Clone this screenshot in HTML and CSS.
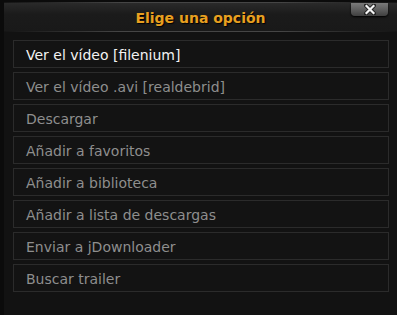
FILE: index.html
```html
<!DOCTYPE html>
<html>
<head>
<meta charset="utf-8">
<link rel="stylesheet" href="styles.css">
</head>
<body>
<div class="dialog">
  <div class="titlebar">
    <span class="title">Elige una opción</span>
    <div class="close">
      <svg class="x" width="12" height="11" viewBox="0 0 12 11">
        <path d="M2 1.5 L10 9.5 M10 1.5 L2 9.5" stroke="#222" stroke-width="4" stroke-linecap="round"/>
        <path d="M2.5 2 L9.5 9 M9.5 2 L2.5 9" stroke="#f4f4f4" stroke-width="2.2" stroke-linecap="square"/>
      </svg>
    </div>
  </div>
  <ul class="menu">
    <li class="item active">Ver el vídeo [filenium]</li>
    <li class="item">Ver el vídeo .avi [realdebrid]</li>
    <li class="item">Descargar</li>
    <li class="item">Añadir a favoritos</li>
    <li class="item">Añadir a biblioteca</li>
    <li class="item">Añadir a lista de descargas</li>
    <li class="item">Enviar a jDownloader</li>
    <li class="item">Buscar trailer</li>
  </ul>
</div>
</body>
</html>
```
FILE: styles.css
```css
html, body {
  margin: 0;
  padding: 0;
  background: #0b0b0b;
  width: 397px;
  height: 315px;
  overflow: hidden;
}
.dialog {
  margin-left: 4px;
  height: 315px;
  background: #121212;
  font-family: "DejaVu Sans", sans-serif;
  position: relative;
}
.titlebar {
  position: relative;
  height: 28px;
  margin-top: 2px;
  border-top: 1px solid #3a3a3a;
  border-bottom: 1px solid #3c3c3c;
  background: linear-gradient(#2a2a2a, #1b1b1b 40%, #191919);
  display: flex;
  justify-content: center;
  align-items: center;
  border-image: linear-gradient(90deg, #141414, #454545 30%, #454545 70%, #141414) 1;
}
.title {
  color: #e8a020;
  font-weight: bold;
  font-size: 14px;
  margin-top: 2px;
  text-shadow: 1px 1px 1px #000;
}
.close {
  position: absolute;
  left: 347px;
  top: 0;
  width: 37px;
  height: 13px;
  border-radius: 0 0 4px 4px;
  background: linear-gradient(#7a7a7a, #5e5e5e 50%, #404040);
  box-shadow: 0 1px 2px #000;
  display: flex;
  justify-content: center;
  align-items: center;
}
.x {
  display: block;
}
.menu {
  list-style: none;
  margin: 0;
  padding: 8px 8px 0 9px;
  display: flex;
  flex-direction: column;
  gap: 4px;
}
.item {
  height: 26px;
  border: 1px solid #2b2b2b;
  background: #131313;
  color: #8e8e8e;
  font-size: 14px;
  padding-left: 12px;
  padding-top: 1px;
  box-sizing: content-box;
  height: 25px;
  display: flex;
  align-items: center;
}
.item.active {
  color: #f2f2f2;
}
```
